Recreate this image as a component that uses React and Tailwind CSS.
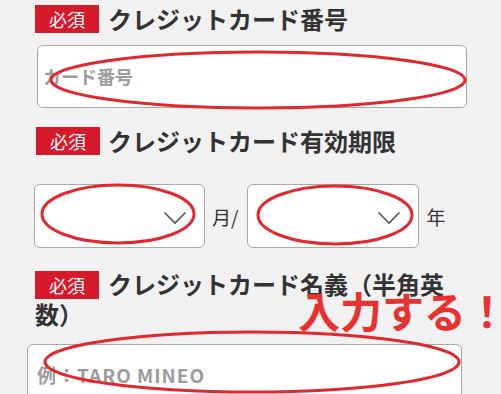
import React from 'react';

const font = { fontFamily: '"Noto Sans CJK JP", "Noto Sans", sans-serif' };

// red "required" tag used before every label
const Badge = ({ className = '' }) => (
  <span className={`inline-flex items-center justify-center w-[64px] h-[28px] bg-[#d71a2b] text-white text-[18px] leading-none ${className}`}>
    必須
  </span>
);

const Chevron = () => (
  <svg width="24" height="14" viewBox="0 0 24 14" className="absolute right-[17px] top-[26px]">
    <path d="M1.5 1.5 L12 12 L22.5 1.5" fill="none" stroke="#555" strokeWidth="1.6" />
  </svg>
);

const SelectBox = ({ className = '' }) => (
  <div className={`relative h-[64px] rounded-[6px] border border-[#a8a8a8] bg-white ${className}`}>
    <Chevron />
  </div>
);

export default function App() {
  return (
    <div className="relative w-[501px] h-[394px] overflow-hidden bg-[#f1f1f1] text-[#333]" style={font}>
      {/* card number */}
      <div className="pt-[5px] pl-[35px]">
        <div className="flex items-center gap-[9px] h-[28px]">
          <Badge />
          <span className="text-[24px] font-bold leading-none">クレジットカード番号</span>
        </div>
        <div className="mt-[12px] ml-[2px] w-[430px] h-[63px] rounded-[6px] border border-[#a8a8a8] bg-white flex items-center pl-[5px]">
          <span className="text-[18px] font-semibold text-[#9c9c9c]">カード番号</span>
        </div>
      </div>

      {/* expiry */}
      <div className="mt-[19px] pl-[36px]">
        <div className="flex items-center gap-[8px] h-[28px]">
          <Badge />
          <span className="text-[24px] font-bold leading-none">クレジットカード有効期限</span>
        </div>
      </div>
      <div className="mt-[29px] pl-[34px] flex items-center">
        <SelectBox className="w-[171px]" />
        <span className="ml-[7px] text-[19px] leading-none">月/</span>
        <SelectBox className="ml-[9px] w-[172px]" />
        <span className="ml-[7px] text-[19px] leading-none">年</span>
      </div>

      {/* card holder */}
      <div className="mt-[21px] pl-[35px]">
        <p className="w-[422px] text-[24px] font-bold leading-[30px]">
          <Badge className="align-middle mr-[9px] font-normal -mt-[4px]" />
          クレジットカード名義（半角英数）
        </p>
        <div className="mt-[15px] -ml-[8px] w-[435px] h-[64px] rounded-[6px] border border-[#a8a8a8] bg-white flex items-center pl-[9px] pb-[3px]">
          <span className="text-[19px] tracking-[1px] font-semibold text-[#9c9c9c]">例：TARO MINEO</span>
        </div>
      </div>

      {/* annotation */}
      <span className="absolute left-[298px] top-[289px] whitespace-nowrap text-[42px] font-bold leading-none text-[#e8322f]">
        入力する！
      </span>
      <svg className="absolute inset-0 pointer-events-none" width="501" height="394" viewBox="0 0 501 394">
        <g fill="none" stroke="#e2282f" strokeWidth="3">
          <ellipse cx="258" cy="80" rx="207" ry="28" />
          <ellipse cx="118" cy="214" rx="76" ry="29" />
          <ellipse cx="335" cy="215" rx="77" ry="29" />
          <ellipse cx="252" cy="362" rx="207" ry="30" />
        </g>
      </svg>
    </div>
  );
}
